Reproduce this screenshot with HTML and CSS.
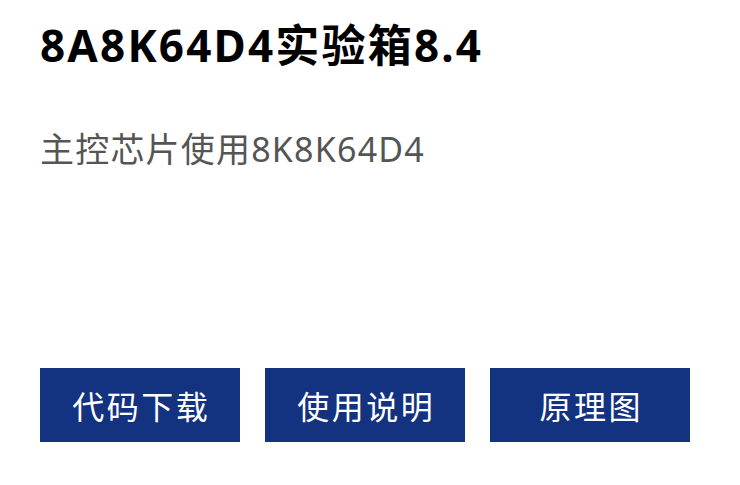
FILE: index.html
```html
<!DOCTYPE html>
<html lang="zh-CN">
<head>
<meta charset="utf-8">
<title>8A8K64D4实验箱8.4</title>
<link rel="stylesheet" href="styles.css">
</head>
<body>
<main class="card">
  <h1 class="card-title">8A8K64D4实验箱8.4</h1>
  <p class="card-desc">主控芯片使用8K8K64D4</p>
  <div class="actions">
    <a class="btn" href="#">代码下载</a>
    <a class="btn" href="#">使用说明</a>
    <a class="btn" href="#">原理图</a>
  </div>
</main>
</body>
</html>
```
FILE: styles.css
```css
html, body {
  margin: 0;
  background: #ffffff;
}
body {
  font-family: "Noto Sans", "Noto Sans CJK SC", sans-serif;
}
.card {
  display: flex;
  flex-direction: column;
  padding: 19px 40px 0;
  height: 485px;
  box-sizing: border-box;
}
.card-title {
  margin: 0;
  font-size: 44px;
  line-height: 52px;
  font-weight: 700;
  letter-spacing: 2.2px;
  color: #000;
}
.card-desc {
  margin: 56px 0 0;
  font-size: 34px;
  line-height: 44px;
  letter-spacing: 1.2px;
  color: #555;
}
.actions {
  display: flex;
  gap: 25px;
  margin-top: auto;
  margin-bottom: 43px;
}
.btn {
  width: 200px;
  height: 74px;
  display: flex;
  align-items: center;
  justify-content: center;
  background: #133381;
  color: #fff;
  font-size: 32px;
  letter-spacing: 2.5px;
  text-indent: 2.5px;
  text-decoration: none;
}
```
